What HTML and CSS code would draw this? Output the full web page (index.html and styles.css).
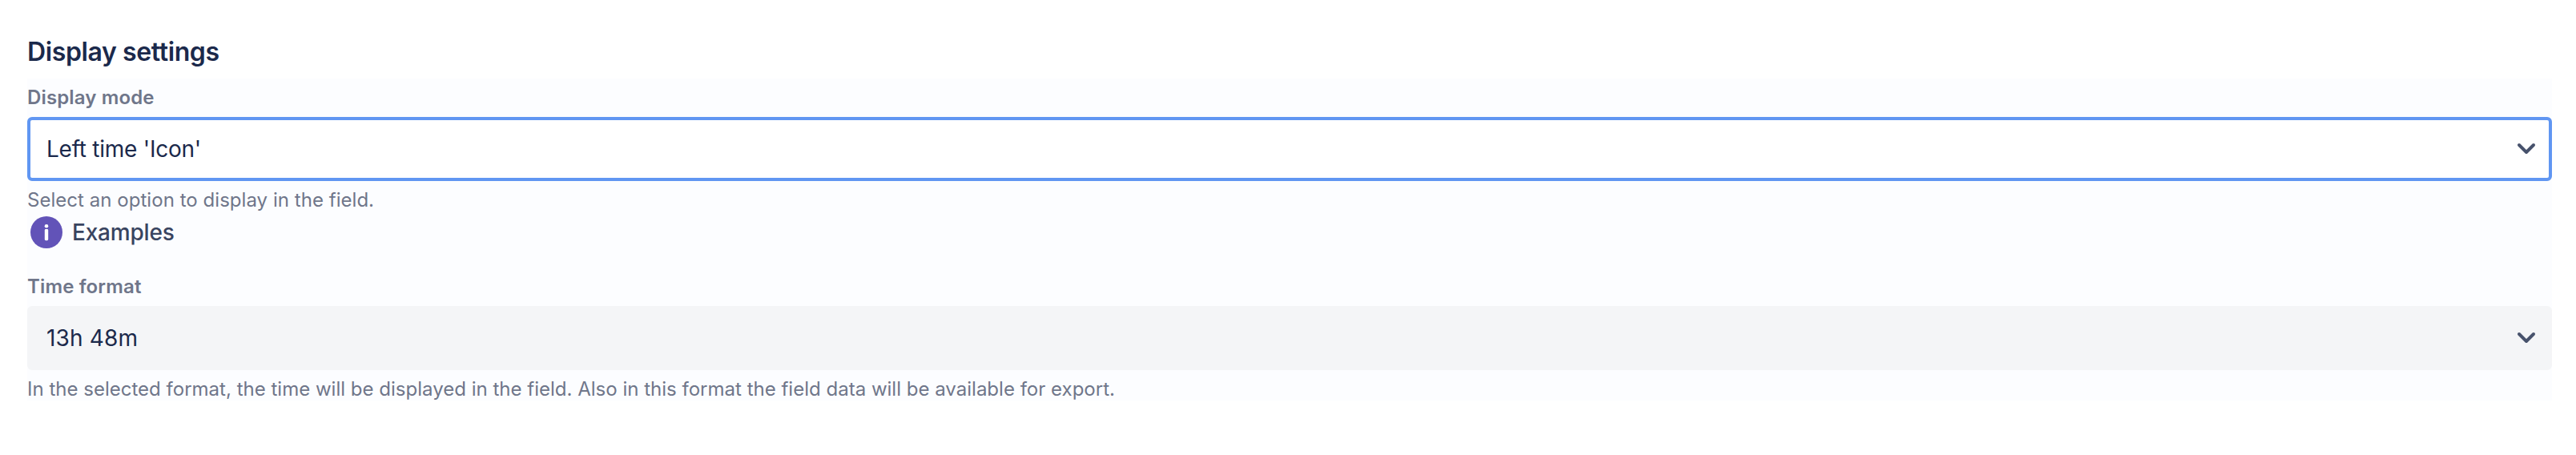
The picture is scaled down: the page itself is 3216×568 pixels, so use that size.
FILE: index.html
```html
<!DOCTYPE html>
<html lang="en"><head><meta charset="utf-8"><title>Display settings</title><link rel="stylesheet" href="styles.css"></head>
<body>
<main class="settings">
<h2 class="title">Display settings</h2>
<div class="panel">
<section class="field">
<div class="label">Display mode</div>
<div class="select select-focused"><span class="value">Left time 'Icon'</span><svg class="chevron" viewBox="0 0 24 16"><path d="M3 3l9 9 9-9"/></svg></div>
<p class="help">Select an option to display in the field.</p>
<div class="examples"><svg class="info" viewBox="0 0 40 40"><circle cx="20" cy="20" r="20"/><circle class="mark" cx="20" cy="12.2" r="2.3"/><rect class="mark" x="17.8" y="16" width="4.4" height="14.2" rx="1.4"/></svg><span class="examples-text">Examples</span></div>
</section>
<section class="field">
<div class="label">Time format</div>
<div class="select"><span class="value value-duration">13h 48m</span><svg class="chevron" viewBox="0 0 24 16"><path d="M3 3l9 9 9-9"/></svg></div>
<p class="help help-export">In the selected format, the time will be displayed in the field. Also in this format the field data will be available for export.</p>
</section>
</div>
</main>
</body></html>
```
FILE: styles.css
```css
* { box-sizing: border-box; }
body { margin: 0; background: #fff; font-family: Inter, sans-serif; color: #1b294b; }
.settings { padding: 32px 30px 0 34px; }
.title { margin: 0; height: 66px; font-size: 32px; line-height: 66px; font-weight: 600; letter-spacing: -0.38px; }
.panel { background: #fcfdff; height: 402px; padding-top: 8px; }
.field { height: 236px; }
.label { height: 40px; line-height: 31px; font-size: 24px; font-weight: 600; letter-spacing: 0.14px; color: #6f768a; }
.select { height: 80px; display: flex; align-items: center; justify-content: space-between; padding: 0 20px 0 24px; background: #f4f5f7; border-radius: 6px; }
.select-focused { background: #fff; border: 4px solid #6096f2; padding: 0 16px 0 20px; }
.value { font-size: 28px; letter-spacing: -0.25px; }
.value-duration { letter-spacing: 0.15px; }
.chevron { width: 24px; height: 16px; fill: none; stroke: #47526c; stroke-width: 4; stroke-linecap: round; stroke-linejoin: round; }
.help { margin: 8px 0 0; height: 32px; line-height: 31px; font-size: 24px; letter-spacing: 0.04px; color: #6f768a; }
.help-export { letter-spacing: 0.01px; }
.examples { display: flex; align-items: center; gap: 12px; padding: 4px; height: 48px; }
.info { width: 40px; height: 40px; fill: #6253b8; }
.mark { fill: #fff; }
.examples-text { font-size: 28px; font-weight: 500; letter-spacing: -0.2px; color: #394460; }
```
